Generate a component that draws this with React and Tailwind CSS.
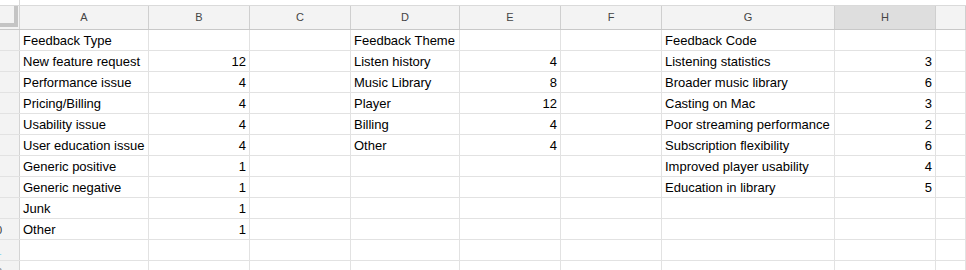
import React from "react";

const columns = [
  { key: "A", width: "w-[129px]" },
  { key: "B", width: "w-[101px]" },
  { key: "C", width: "w-[101px]" },
  { key: "D", width: "w-[109px]" },
  { key: "E", width: "w-[101px]" },
  { key: "F", width: "w-[101px]" },
  { key: "G", width: "w-[173px]" },
  { key: "H", width: "w-[101px]" },
  { key: "I", width: "flex-1" },
];

const typeRows = [
  ["Feedback Type", ""],
  ["New feature request", 12],
  ["Performance issue", 4],
  ["Pricing/Billing", 4],
  ["Usability issue", 4],
  ["User education issue", 4],
  ["Generic positive", 1],
  ["Generic negative", 1],
  ["Junk", 1],
  ["Other", 1],
];

const themeRows = [
  ["Feedback Theme", ""],
  ["Listen history", 4],
  ["Music Library", 8],
  ["Player", 12],
  ["Billing", 4],
  ["Other", 4],
];

const codeRows = [
  ["Feedback Code", ""],
  ["Listening statistics", 3],
  ["Broader music library", 6],
  ["Casting on Mac", 3],
  ["Poor streaming performance", 2],
  ["Subscription flexibility", 6],
  ["Improved player usability", 4],
  ["Education in library", 5],
];

const rowCount = 12;

const buildRow = (i) => {
  const t = typeRows[i] || ["", ""];
  const th = themeRows[i] || ["", ""];
  const c = codeRows[i] || ["", ""];
  return [t[0], t[1], "", th[0], th[1], "", c[0], c[1], ""];
};

const numberColor = (n) => {
  if (n === 11) return "text-[#7fd3ea]";
  if (n === 12) return "text-[#8a8a8a]";
  return "text-[#333]";
};

const App = () => {
  return (
    <div className="w-[966px] h-[270px] overflow-hidden bg-white font-['Liberation_Sans',Arial,sans-serif]">
      {/* strip above headers */}
      <div className="flex h-[6px] border-b border-[#dadada]">
        <div className="w-[20px] border-r border-[#dadada]" />
      </div>

      {/* column headers */}
      <div className="flex h-[24px] bg-[#f3f3f3] border-b border-[#c8c8c8]">
        <div className="w-[20px] border-r border-[#d4d4d4]">
          <div className="w-[18px] h-[21px] border-r-4 border-b-4 border-[#c4c4c4]" />
        </div>
        {columns.map((col) => (
          <div
            key={col.key}
            className={`${col.width} shrink-0 flex items-center justify-center text-[11px] text-[#444] border-r border-[#cfcfcf] ${
              col.key === "H" ? "bg-[#dedede]" : ""
            }`}
          >
            {col.key === "I" ? "" : col.key}
          </div>
        ))}
      </div>

      {/* body rows */}
      {Array.from({ length: rowCount }).map((_, i) => {
        const values = buildRow(i);
        const n = i + 1;
        return (
          <div key={n} className="flex h-[21px] border-b border-[#e2e2e2]">
            <div className="w-[20px] shrink-0 overflow-hidden bg-[#f3f3f3] border-r border-[#d4d4d4]">
              <div
                className={`w-[46px] ml-[-27px] h-full flex items-center justify-center pt-[2px] text-[11px] ${numberColor(n)}`}
              >
                {n}
              </div>
            </div>
            {columns.map((col, ci) => {
              const v = values[ci];
              const isNum = typeof v === "number";
              return (
                <div
                  key={col.key}
                  className={`${col.width} shrink-0 flex items-center px-[3px] pt-[2px] text-[13px] text-black whitespace-nowrap overflow-hidden border-r border-[#e2e2e2] ${
                    isNum ? "justify-end" : ""
                  }`}
                >
                  {v}
                </div>
              );
            })}
          </div>
        );
      })}
    </div>
  );
};

export default App;
